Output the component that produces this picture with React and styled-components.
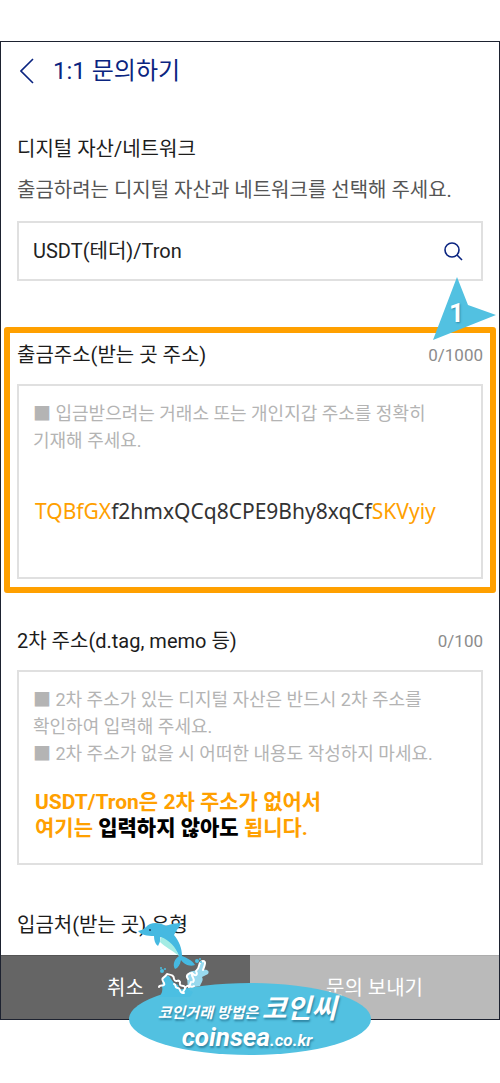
import React from "react";
import styled, { createGlobalStyle, css } from "styled-components";

const GlobalStyle = createGlobalStyle`
    *{
        box-sizing:border-box;
    }
    body{
        margin:0;
        background-color:#fff;
        color:#222;
        font-family:Roboto, "Noto Sans CJK KR", sans-serif;
        font-size:20px;
        line-height:28px;
    }
    button, input, textarea{
        font:inherit;
        color:inherit;
        border:none;
        background:none;
        margin:0;
        padding:0;
        outline:none;
    }
`

const Page = styled.div`
    padding:41px 0 63px;
`

const Screen = styled.main`
    position:relative;
    border:1px solid #1d2230;
`

const Header = styled.header`
    display:flex;
    align-items:center;
    gap:16px;
    height:58px;
    padding:0 16px;
    color:#0a2480;
    h1{
        margin:0;
        font-size:24px;
        font-weight:400;
    }
`

const BackButton = styled.button`
    display:flex;
    width:20px;
    justify-content:center;
`

const Form = styled.form`
    display:flex;
    flex-direction:column;
`

const Field = styled.section`
    margin:0 3px;
    padding:34px 13px 0;
    ${props => props.$marked && css`
        padding:8px 7px;
        border:6px solid #ffa000;
        border-radius:3px;
    `}
`

const AssetField = styled(Field)`
    padding-top:35px;
    padding-bottom:46px;
`

const TypeField = styled(Field)`
    padding-top:46px;
    padding-bottom:16px;
`

const FieldHead = styled.div`
    display:flex;
    justify-content:space-between;
    align-items:center;
    margin-bottom:15px;
`

const Label = styled.label`
    display:block;
    color:#1c1c1c;
`

const Counter = styled.span`
    font-size:17px;
    color:#8c8c8c;
`

const Guide = styled.p`
    margin:13px 0 17px;
    color:#555;
`

const SearchBox = styled.div`
    display:flex;
    align-items:center;
    height:60px;
    padding:0 18px 0 14px;
    border:2px solid #e0e0e0;
    input{
        flex:1;
        min-width:0;
    }
    button{
        display:flex;
        color:#0a2480;
    }
`

const MemoBox = styled.div`
    position:relative;
    textarea{
        display:block;
        width:100%;
        height:195px;
        padding:14px;
        border:2px solid #e0e0e0;
        font-size:18px;
        line-height:27px;
        word-break:keep-all;
        resize:none;
    }
    textarea::placeholder{
        color:#b4b4b4;
        opacity:1;
    }
`

const Note = styled.p`
    position:absolute;
    left:18px;
    bottom:24px;
    margin:0;
    color:#ffa000;
    font-size:21px;
    font-weight:700;
    line-height:26px;
    white-space:nowrap;
    pointer-events:none;
    b{
        color:#000;
    }
`

const AddressNote = styled(Note)`
    bottom:55px;
    font-family:"Noto Sans", sans-serif;
    font-weight:400;
    b{
        color:#333;
        font-weight:400;
    }
`

const Footer = styled.footer`
    position:relative;
    display:grid;
    grid-template-columns:1fr 1fr;
`

const FooterButton = styled.button`
    height:64px;
    color:#fff;
    background-color:${props => props.$main ? "#bababa" : "#656565"};
    border-top:1px solid ${props => props.$main ? "#adadad" : "#555"};
`

const Pointer = styled.div`
    position:absolute;
    right:1px;
    top:234px;
    width:66px;
    height:66px;
    color:#fff;
    svg{
        position:absolute;
        inset:0;
    }
    span{
        position:absolute;
        left:17px;
        top:23px;
        font-size:26px;
        font-weight:700;
        text-shadow:1px 1px 2px #3088a5;
    }
`

const Badge = styled.a`
    position:absolute;
    left:50%;
    top:28px;
    width:242px;
    height:72px;
    margin-left:-121px;
    padding:10px 6px 0 0;
    border-radius:50%;
    background-color:#52c1e1;
    color:#fff;
    font-style:italic;
    font-weight:700;
    text-align:center;
    text-decoration:none;
    text-shadow:1px 2px 2px #2f86a4;
    white-space:nowrap;
    svg{
        position:absolute;
        left:5px;
        top:-65px;
    }
`

const BadgeLine = styled.span`
    display:block;
    height:${props => props.$height};
    font-size:${props => props.$size};
    line-height:${props => props.$height};
    small{
        font-size:${props => props.$small};
    }
`

const Dolphin = () => (
    <svg width="80" height="80" viewBox="0 0 80 80" aria-hidden="true">
        <path d="M25 79C28 76 29 72 28 68L29 60C31 57 35 56 37 61L40 65L44 67L46 72L52 70L59 74L56 79Z" fill="#4bbfe2" />
        <path d="M54 70L53 60C52 57 55 53 59 53L64 52C65 47 65 43 69 43C72 44 70 49 69 52C73 51 76 53 74 56L68 59C70 62 67 65 66 68Z" fill="#98d9ee" />
        <path d="M25 69C25 66 32 69 30 65C26 59 30 61 33 56C37 57 40 57 40 61C42 66 44 60 46 64C45 70 49 66 51 69C52 73 47 73 50 75M40 66C43 67 40 70 44 70C47 70 45 75 49 75M52 69C55 65 56 71 60 68M54 61C51 57 55 55 58 55C62 59 64 57 62 53C67 50 63 44 69 43C73 43 70 49 69 52" fill="none" stroke="#fff" strokeWidth="2" strokeLinecap="round" strokeLinejoin="round" />
        <path d="M58 55C57 60 62 61 59 64M57 64L55 69" fill="none" stroke="#fff" strokeWidth="2" strokeLinecap="round" />
        <g fill="#4bbfe2">
            <circle cx="28" cy="53" r="2" />
            <circle cx="31" cy="51" r="1" />
            <circle cx="27" cy="50" r="1" />
            <circle cx="63" cy="43" r="2" />
            <circle cx="66" cy="41" r="1" />
            <circle cx="67" cy="44" r="1" />
        </g>
        <path d="M4 13C8 12 10 11 12 9C16 4 25 4 32 8C36 6 42 5 48 5C45 9 42 13 40 17C45 23 48 30 48 38C53 40 58 42 61 47C55 49 50 46 47 42C46 47 44 50 41 51C38 46 41 41 45 38C41 29 33 22 26 19C27 23 25 26 24 28C21 26 20 22 20 18C13 18 7 17 4 13Z" fill="#45b9e1" />
        <path d="M27 19C35 22 42 29 45 38C38 32 31 29 26 24Z" fill="#a3ece4" />
        <circle cx="16" cy="12" r="1" fill="#173d58" />
    </svg>
)

const App = () => {
    return (
        <Page>
            <GlobalStyle />
            <Screen>
                <Header>
                    <BackButton type="button" aria-label="뒤로">
                        <svg width="14" height="26" viewBox="0 0 14 26" fill="none" stroke="currentColor" strokeWidth="1.6">
                            <path d="M13 1L1 13L13 25" />
                        </svg>
                    </BackButton>
                    <h1>1:1 문의하기</h1>
                </Header>
                <Form onSubmit={e => e.preventDefault()}>
                    <AssetField>
                        <Label htmlFor="asset">디지털 자산/네트워크</Label>
                        <Guide>출금하려는 디지털 자산과 네트워크를 선택해 주세요.</Guide>
                        <SearchBox>
                            <input id="asset" defaultValue="USDT(테더)/Tron" />
                            <button type="button" aria-label="검색">
                                <svg width="19" height="19" viewBox="0 0 19 19" fill="none" stroke="currentColor" strokeWidth="1.6">
                                    <circle cx="8" cy="8" r="7" />
                                    <path d="M13 13L18 18" />
                                </svg>
                            </button>
                        </SearchBox>
                    </AssetField>
                    <Field $marked>
                        <FieldHead>
                            <Label htmlFor="address">출금주소(받는 곳 주소)</Label>
                            <Counter>0/1000</Counter>
                        </FieldHead>
                        <MemoBox>
                            <textarea id="address" placeholder="■ 입금받으려는 거래소 또는 개인지갑 주소를 정확히 기재해 주세요." />
                            <AddressNote>TQBfGX<b>f2hmxQCq8CPE9Bhy8xqCf</b>SKVyiy</AddressNote>
                        </MemoBox>
                    </Field>
                    <Field>
                        <FieldHead>
                            <Label htmlFor="tag">2차 주소(d.tag, memo 등)</Label>
                            <Counter>0/100</Counter>
                        </FieldHead>
                        <MemoBox>
                            <textarea
                                id="tag"
                                placeholder={"■ 2차 주소가 있는 디지털 자산은 반드시 2차 주소를 확인하여 입력해 주세요.\n■ 2차 주소가 없을 시 어떠한 내용도 작성하지 마세요."}
                            />
                            <Note>USDT/Tron은 2차 주소가 없어서<br />여기는 <b>입력하지 않아도</b> 됩니다.</Note>
                        </MemoBox>
                    </Field>
                    <TypeField>
                        <Label as="div">입금처(받는 곳) 유형</Label>
                    </TypeField>
                    <Footer>
                        <FooterButton type="button">취소</FooterButton>
                        <FooterButton $main>문의 보내기</FooterButton>
                        <Badge href="#">
                            <Dolphin />
                            <BadgeLine $size="27px" $height="32px" $small="15px"><small>코인거래 방법은 </small>코인씨</BadgeLine>
                            <BadgeLine $size="26px" $height="24px" $small="17px">coinsea<small>.co.kr</small></BadgeLine>
                        </Badge>
                    </Footer>
                </Form>
                <Pointer>
                    <svg width="66" height="66" viewBox="0 0 66 66" aria-hidden="true">
                        <path d="M25 1L36 29L64 39L1 64Z" fill="#52c1e1" />
                    </svg>
                    <span>1</span>
                </Pointer>
            </Screen>
        </Page>
    )
}

export default App
